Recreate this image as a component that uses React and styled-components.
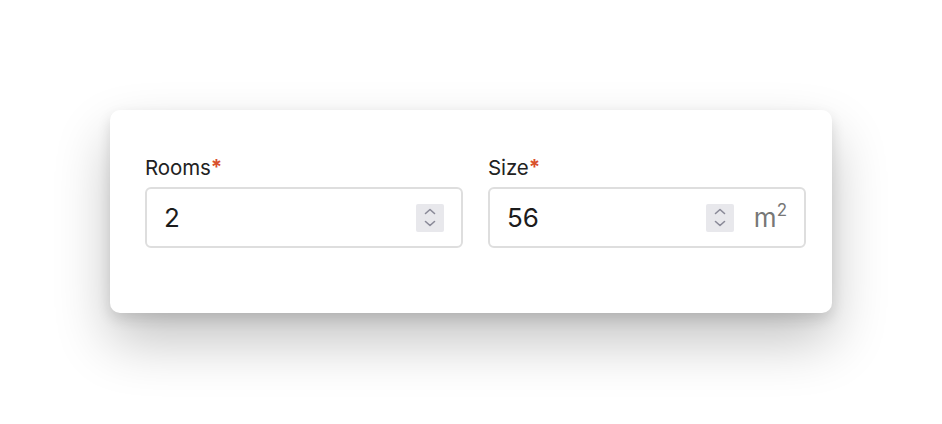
import React from "react";
import styled, { createGlobalStyle } from "styled-components";

const GlobalStyle = createGlobalStyle`
  html, body {
    margin: 0;
    padding: 0;
    background: #ffffff;
    font-family: Inter, "Helvetica Neue", Arial, sans-serif;
  }
`;

const Page = styled.div`
  padding: 110px 0 0 110px;
  height: 424px;
  box-sizing: border-box;
`;

const Card = styled.div`
  width: 722px;
  height: 203px;
  box-sizing: border-box;
  background: #fff;
  border-radius: 10px;
  box-shadow: 0 28px 55px rgba(0, 0, 0, 0.24), 0 6px 14px rgba(0, 0, 0, 0.12);
  padding: 46px 26px 0 35px;
  display: grid;
  grid-template-columns: 318px 318px;
  column-gap: 25px;
  align-content: start;
`;

const Field = styled.div`
  display: flex;
  flex-direction: column;
  gap: 7px;
`;

const Label = styled.label`
  font-size: 20.5px;
  line-height: 24px;
  color: #222;
  letter-spacing: -0.1px;
`;

const Required = styled.span`
  color: #d9502c;
  font-weight: 700;
  position: relative;
  top: -1px;
`;

const InputBox = styled.div`
  height: 61px;
  box-sizing: border-box;
  border: 2px solid #dedede;
  border-radius: 6px;
  display: flex;
  align-items: center;
  padding: 0 17px 0 17px;
`;

const Value = styled.input`
  flex: 1;
  min-width: 0;
  border: none;
  outline: none;
  background: transparent;
  font-family: inherit;
  font-size: 26px;
  color: #1c1c1c;
  padding: 0;
`;

const Stepper = styled.div`
  width: 28px;
  height: 28px;
  background: #e8e8ec;
  border-radius: 2px;
  display: flex;
  align-items: center;
  justify-content: center;
  margin-top: 1px;
`;

const Unit = styled.span`
  margin-left: 20px;
  font-size: 26px;
  color: #777;
  line-height: 1;
  sup {
    font-size: 17px;
    vertical-align: 11px;
    line-height: 0;
  }
`;

const Chevrons = () => (
  <svg width="28" height="28" viewBox="0 0 28 28" fill="none">
    <path d="M9.5 9.5 L14 5.5 L18.5 9.5" stroke="#8a8a98" strokeWidth="1.6" strokeLinecap="round" strokeLinejoin="round" />
    <path d="M9.5 17.5 L14 21.5 L18.5 17.5" stroke="#8a8a98" strokeWidth="1.6" strokeLinecap="round" strokeLinejoin="round" />
  </svg>
);

const NumberField = ({ label, value, unit }) => (
  <Field>
    <Label>
      {label}
      <Required>*</Required>
    </Label>
    <InputBox>
      <Value defaultValue={value} />
      <Stepper>
        <Chevrons />
      </Stepper>
      {unit && (
        <Unit>
          m<sup>2</sup>
        </Unit>
      )}
    </InputBox>
  </Field>
);

export default function App() {
  return (
    <>
      <GlobalStyle />
      <Page>
        <Card>
          <NumberField label="Rooms" value="2" />
          <NumberField label="Size" value="56" unit />
        </Card>
      </Page>
    </>
  );
}
